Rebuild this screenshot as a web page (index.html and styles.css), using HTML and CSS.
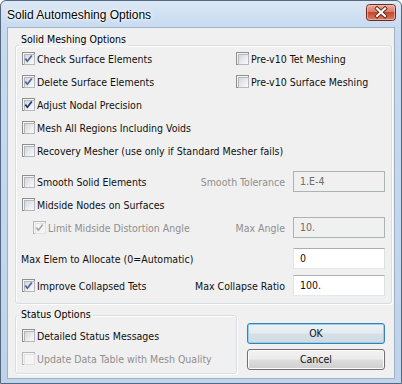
FILE: index.html
```html
<!DOCTYPE html>
<html>
<head>
<meta charset="utf-8">
<title>Solid Automeshing Options</title>
<link rel="stylesheet" href="styles.css">
</head>
<body>
<div class="window">
  <div class="titlebar">
    <span class="title">Solid Automeshing Options</span>
    <span class="close">
      <svg width="30" height="17" viewBox="0 0 30 17">
        <defs>
          <linearGradient id="rg" x1="0" y1="0" x2="0" y2="1">
            <stop offset="0" stop-color="#eab0a3"/>
            <stop offset="0.45" stop-color="#dc7c68"/>
            <stop offset="0.5" stop-color="#c8472d"/>
            <stop offset="1" stop-color="#d9826a"/>
          </linearGradient>
        </defs>
        <rect x="0.5" y="0.5" width="29" height="16" rx="3" fill="url(#rg)" stroke="#6e2a1e"/>
        <rect x="1.5" y="1.5" width="27" height="14" rx="2" fill="none" stroke="#f3c9bf" stroke-opacity="0.6"/>
        <path d="M11 4.5 L19 12 M19 4.5 L11 12" stroke="#5a1f14" stroke-width="3.8" stroke-linecap="square"/>
        <path d="M11 4.5 L19 12 M19 4.5 L11 12" stroke="#ffffff" stroke-width="2.2" stroke-linecap="square"/>
      </svg>
    </span>
  </div>
  <div class="client">
    <div class="group g1">
      <span class="glabel g1label">Solid Meshing Options</span>
      <div class="row">
        <label class="chk col1"><span class="cb on"><svg class="ck" viewBox="0 0 11 11"><path d="M2.3 5.6 L4.4 8.2 L8.8 2.4"/></svg></span>Check Surface Elements</label>
        <label class="chk"><span class="cb"></span>Pre-v10 Tet Meshing</label>
      </div>
      <div class="row">
        <label class="chk col1"><span class="cb on"><svg class="ck" viewBox="0 0 11 11"><path d="M2.3 5.6 L4.4 8.2 L8.8 2.4"/></svg></span>Delete Surface Elements</label>
        <label class="chk"><span class="cb"></span>Pre-v10 Surface Meshing</label>
      </div>
      <div class="row">
        <label class="chk"><span class="cb on dark"><svg class="ck" viewBox="0 0 11 11"><path d="M2.3 5.6 L4.4 8.2 L8.8 2.4"/></svg></span>Adjust Nodal Precision</label>
      </div>
      <div class="row">
        <label class="chk"><span class="cb"></span>Mesh All Regions Including Voids</label>
      </div>
      <div class="row">
        <label class="chk"><span class="cb"></span>Recovery Mesher (use only if Standard Mesher fails)</label>
      </div>
      <div class="row mt8">
        <label class="chk"><span class="cb"></span>Smooth Solid Elements</label>
        <span class="flabel dis">Smooth Tolerance</span>
        <span class="tb disabled">1.E-4</span>
      </div>
      <div class="row">
        <label class="chk"><span class="cb"></span>Midside Nodes on Surfaces</label>
      </div>
      <div class="row">
        <label class="chk indent dis"><span class="cb on disabled"><svg class="ck" viewBox="0 0 11 11"><path d="M2.3 5.6 L4.4 8.2 L8.8 2.4"/></svg></span>Limit Midside Distortion Angle</label>
        <span class="flabel dis">Max Angle</span>
        <span class="tb disabled">10.</span>
      </div>
      <div class="row mt8">
        <span class="plain">Max Elem to Allocate (0=Automatic)</span>
        <span class="tb push">0</span>
      </div>
      <div class="row mt4">
        <label class="chk"><span class="cb on"><svg class="ck" viewBox="0 0 11 11"><path d="M2.3 5.6 L4.4 8.2 L8.8 2.4"/></svg></span>Improve Collapsed Tets</label>
        <span class="flabel">Max Collapse Ratio</span>
        <span class="tb">100.</span>
      </div>
    </div>
    <div class="bottom">
      <div class="group g2">
        <span class="glabel">Status Options</span>
        <div class="row">
          <label class="chk"><span class="cb"></span>Detailed Status Messages</label>
        </div>
        <div class="row">
          <label class="chk dis"><span class="cb disabled"></span>Update Data Table with Mesh Quality</label>
        </div>
      </div>
      <div class="buttons">
        <span class="btn def">OK</span>
        <span class="btn">Cancel</span>
      </div>
    </div>
  </div>
</div>
</body>
</html>
```
FILE: styles.css
```css
* { box-sizing: border-box; }
html, body { margin: 0; padding: 0; }
body {
  width: 402px;
  height: 384px;
  overflow: hidden;
  background: #ffffff;
  font-family: "DejaVu Sans Condensed", "Liberation Sans", Arial, sans-serif;
  font-size: 10.5px;
  color: #111;
}
.window {
  width: 402px;
  height: 384px;
  border: 1px solid #56687e;
  border-radius: 6px 6px 0 0;
  background: linear-gradient(#dce8f5 0, #c6daf0 27px, #bfd4ec 100%);
  padding: 0 6px 4px 6px;
  display: flex;
  flex-direction: column;
}
.titlebar {
  height: 26px;
  flex: none;
  display: flex;
  align-items: flex-start;
  margin: 0 -6px;
  padding: 0 5px 0 6px;
}
.title {
  font-family: "Liberation Sans", Arial, sans-serif;
  font-size: 12px;
  line-height: 14px;
  margin-top: 7px;
  color: #000;
  text-shadow: 0 0 6px #fff, 0 0 3px #fff, 0 0 2px #fff;
}
.close {
  margin-left: auto;
  margin-top: 3px;
  width: 30px;
  height: 17px;
  display: block;
}
.close svg { display: block; }
.client {
  flex: 1;
  background: #f0f0f0;
  border: 1px solid #9fb1c5;
  padding: 17px 0 0 7px;
}
.group {
  position: relative;
  border: 1px solid #d5dfe5;
  border-radius: 3px;
  box-shadow: inset 1px 1px 0 #fff, 1px 1px 0 #fff;
}
.g1 {
  width: 377px;
  height: 259px;
  padding: 1px 6px 0 6px;
}
.glabel {
  position: absolute;
  top: -9px;
  left: 3px;
  padding: 0 2px;
  line-height: 14px;
  background: #f0f0f0;
  color: #000;
}
.g1label { top: -14px; }
.row {
  display: flex;
  align-items: center;
  height: 23px;
}
.mt8 { margin-top: 8px; }
.mt4 { margin-top: 4px; }
.chk {
  display: flex;
  align-items: center;
  gap: 2px;
  white-space: nowrap;
}
.col1 { width: 214px; flex: none; }
.indent { margin-left: 11px; }
.plain { margin-left: -1px; }
.dis { color: #8f8f8f; }
.flabel {
  margin-left: auto;
  margin-right: 8px;
}
.push { margin-left: auto; }
.cb {
  position: relative;
  width: 13px;
  height: 13px;
  flex: none;
  border: 1px solid #8e8f8f;
  background: #f4f4f4;
  padding: 1px;
}
.cb::before {
  content: "";
  display: block;
  width: 9px;
  height: 9px;
  border: 1px solid #b4b8bd;
  background: linear-gradient(135deg, #d3d7dc 0, #eceef0 60%, #fbfbfb 100%);
}
.cb.disabled { border-color: #b8b8b8; }
.cb.disabled::before { border-color: #e2e2e2; background: #f5f5f5; }
.ck {
  position: absolute;
  left: 0;
  top: 0;
  width: 11px;
  height: 11px;
  fill: none;
  stroke: #4f6794;
  stroke-width: 1.7;
}
.cb.dark .ck { stroke: #1c3470; }
.cb.disabled .ck { stroke: #a9a9a9; }
.tb {
  flex: none;
  width: 92px;
  height: 21px;
  border: 1px solid;
  border-color: #abadb3 #dbdfe6 #e3e9ef #e2e3ea;
  background: #fff;
  padding-left: 6px;
  line-height: 19px;
}
.tb.disabled {
  background: #f0f0f0;
  border-color: #adb2b5;
  color: #6d6d6d;
}
.bottom {
  display: flex;
  margin-top: 11px;
}
.g2 {
  width: 222px;
  height: 59px;
  padding: 8px 6px 0 6px;
  flex: none;
}
.buttons {
  margin-left: 10px;
  padding-top: 8px;
  width: 138px;
  display: flex;
  flex-direction: column;
  gap: 5px;
}
.btn {
  display: block;
  height: 21px;
  border: 1px solid #707070;
  border-radius: 3px;
  background: linear-gradient(#f2f2f2 0, #ebebeb 48%, #dddddd 52%, #cfcfcf 100%);
  box-shadow: inset 0 0 0 1px #fbfbfb;
  text-align: center;
  line-height: 19px;
}
.btn.def {
  border-color: #3c7fb1;
  background: linear-gradient(#edf2f5 0, #e4ebef 48%, #d6e0e6 52%, #cfdbe2 100%);
  box-shadow: inset 0 0 0 1px #8fd3f3;
}
```
